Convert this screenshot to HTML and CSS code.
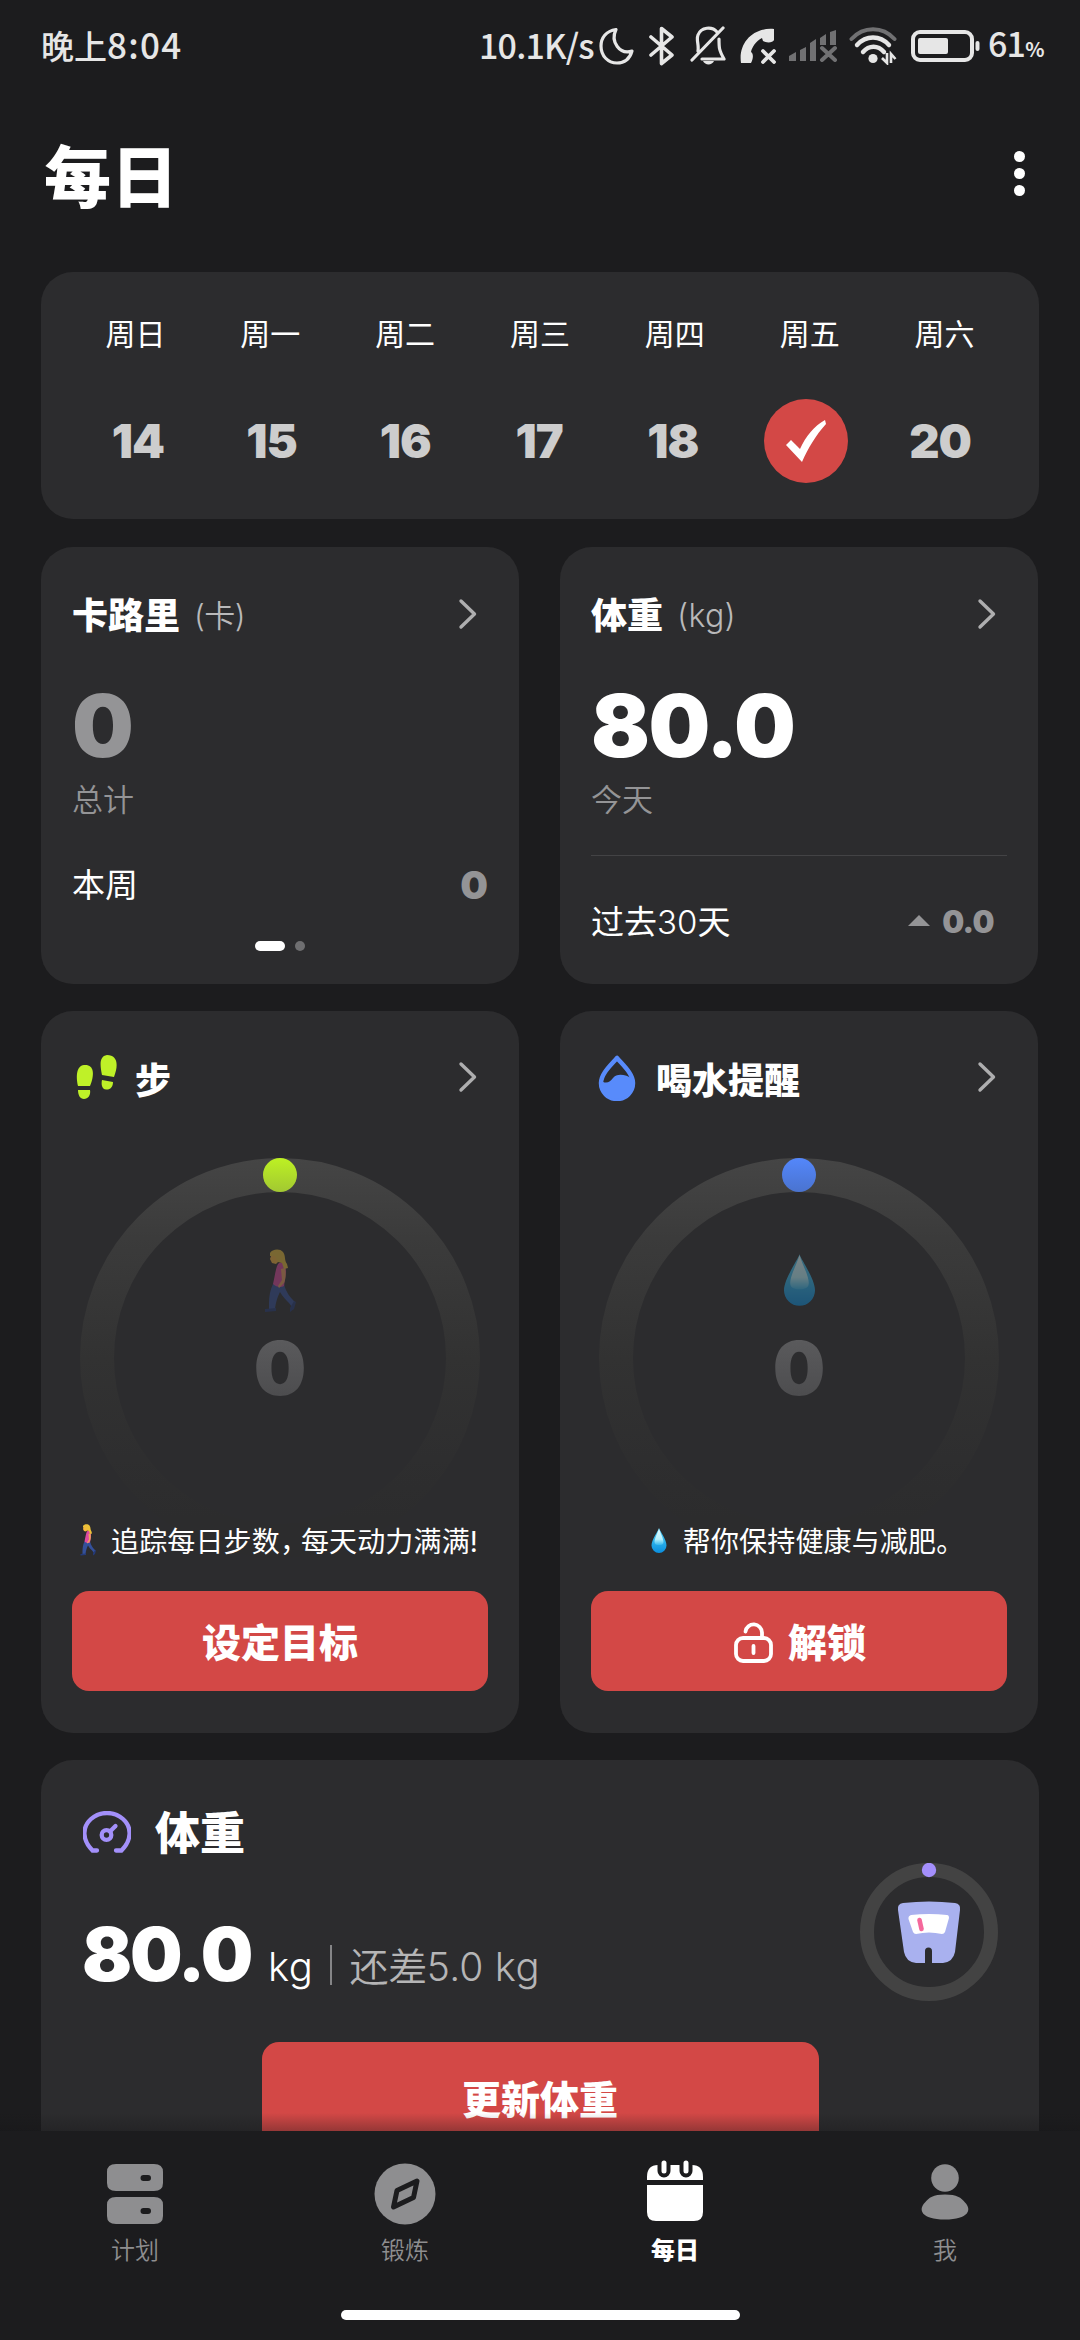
FILE: index.html
```html
<!DOCTYPE html>
<html lang="zh-CN">
<head>
<meta charset="utf-8">
<title>每日</title>
<link rel="stylesheet" href="styles.css">
</head>
<body>
<svg class="defs" width="0" height="0" aria-hidden="true">
  <defs>
    <linearGradient id="fade" gradientUnits="userSpaceOnUse" x1="0" y1="0" x2="0" y2="400">
      <stop offset="0" stop-color="#454545"/>
      <stop offset=".2" stop-color="#3b3b3b"/>
      <stop offset=".5" stop-color="#323232"/>
      <stop offset=".75" stop-color="#2e2e2f"/>
      <stop offset=".9" stop-color="#2c2c2d"/>
    </linearGradient>
    <linearGradient id="lime" x1="0" y1="0" x2="0" y2="1"><stop offset="0" stop-color="#bdf123"/><stop offset="1" stop-color="#a2c832"/></linearGradient>
    <linearGradient id="blue" x1="0" y1="0" x2="0" y2="1"><stop offset="0" stop-color="#5487fb"/><stop offset="1" stop-color="#4a73cf"/></linearGradient>
    <linearGradient id="dropOuter" x1="0" y1="0" x2="0" y2="1"><stop offset="0" stop-color="#50c8f0"/><stop offset=".5" stop-color="#2fb4ec"/><stop offset="1" stop-color="#0a8ede"/></linearGradient>
    <linearGradient id="dropInner" x1="0" y1="0" x2="0" y2="1"><stop offset="0" stop-color="#e4fbff"/><stop offset=".65" stop-color="#b5f0fc"/><stop offset="1" stop-color="#35b8ee"/></linearGradient>
    <symbol id="chevron" viewBox="0 0 20 32"><path d="M3 3l13.500 13L3 29" fill="none" stroke="currentColor" stroke-width="3.400" stroke-linecap="round" stroke-linejoin="round"/></symbol>
    <symbol id="drop" viewBox="0 0 30 50">
      <path d="M15 0C17 6 30 24 30 35a15 15 0 0 1-30 0C0 24 13 6 15 0z" fill="url(#dropOuter)"/>
      <path d="M15 1c2 7 9 20 9 27 0 5-4 6-9 6s-9-1-9-6C6 21 13 8 15 1z" fill="url(#dropInner)"/>
    </symbol>
    <symbol id="walker" viewBox="0 0 32 64">
      <path d="M9 35c-3 6-4 13-4 19l0 6 6 0c1-8 3-13 5-17 3 5 6 8 9 11l3 4 3-5c-4-4-9-9-11-18z" fill="#34509a"/>
      <path d="M1 60l11-1 0 3-11 1zM26 59l4-7 2 1-2 7-4 3z" fill="#243a78"/>
      <path d="M15 14c-3 2-4 13-6 21 3 3 8 4 11 2l2-14c0-5-1-8-3-10z" fill="#dd48a0"/>
      <path d="M17 20l4-1c1 6 1 10-1 15l-5 5-1-2 4-6z" fill="#f0a060"/>
      <path d="M8 4c3 0 6 2 7 8l-3 3-4-1-2-4z" fill="#f8b63c"/>
      <path d="M6 4C8 0 16-1 19 3c3 4 1 8 4 12l1 4-4 1-2-6-4-1-3-6-5 0z" fill="#ecc038"/>
    </symbol>
  </defs>
</svg>

<header class="status">
  <span class="status-time">晚上<span class="status-digits">8:04</span></span>
  <div class="status-right">
    <span class="speed">10.1K/s</span>
    <svg class="ic-moon" width="36" height="38" viewBox="0 0 36 38"><path d="M17 2.500C7 4 2 11 2 19c0 10 7 17 16 17 8 0 13-5 15-12C21 28 11 15 17 2.500z" fill="none" stroke="#e6e6e6" stroke-width="3.200" stroke-linejoin="round"/></svg>
    <svg class="ic-bt" width="26" height="40" viewBox="0 0 26 40"><path d="M2 11l21 18-10.500 8.500v-35L23 11 2 29" fill="none" stroke="#e6e6e6" stroke-width="3.600" stroke-linejoin="round" stroke-linecap="round"/></svg>
    <svg class="ic-bell" width="36" height="40" viewBox="0 0 36 40"><path d="M8 25C9 18 6 14 8 9c3-8 14-9 19-3M29 13c0 9 0 11 5 20H12M33 2L2 34" fill="none" stroke="#e6e6e6" stroke-width="3.200" stroke-linecap="round" stroke-linejoin="round"/><path d="M13 35h11c-2 4.500-9 4.500-11 0z" fill="#e6e6e6"/></svg>
    <svg class="ic-call" width="36" height="36" viewBox="0 0 36 36"><path d="M34 1v11c-1 3-8 3-11 1l-1-3c-6 3-10 9-11 14 3 2 2 7 0 11H1C-2 15 13-1 34 1z" fill="#e6e6e6"/><path d="M23 23l11 11M34 23L23 34" stroke="#e6e6e6" stroke-width="3.800" stroke-linecap="round"/></svg>
    <svg class="ic-signal" width="48" height="32" viewBox="0 0 48 32"><g fill="#717173"><path d="M0 26l7-4v9H0zM11 20l6-3v14h-6zM21 13l6-4v22h-6zM31 8l6-4v11h-6zM41 2l6-2v15h-6z"/></g><path d="M33 18l13 12M46 18L33 30" stroke="#717173" stroke-width="4" stroke-linecap="round"/></svg>
    <svg class="ic-wifi" width="48" height="38" viewBox="0 0 48 38"><g fill="none" stroke-linecap="round"><path d="M2.500 12c12-13 31-13 43 0" stroke="#717173" stroke-width="4"/><path d="M8 18c9-10 23-10 32 0M14 25c6-7 15-7 21 0" stroke="#e6e6e6" stroke-width="4.400"/></g><circle cx="24" cy="31.500" r="4.600" fill="#e6e6e6"/><path d="M38 26v10l-5-5M42 36V27l4.500 5" fill="none" stroke="#e6e6e6" stroke-width="2.600"/></svg>
    <svg class="ic-batt" width="69" height="32" viewBox="0 0 69 32"><rect x="2" y="2" width="59" height="28" rx="7" fill="none" stroke="#e6e6e6" stroke-width="4"/><rect x="7" y="8" width="30" height="16" rx="2" fill="#e6e6e6"/><rect x="64.500" y="11" width="4" height="10" rx="2" fill="#e6e6e6"/></svg>
    <span class="percent">61<small>%</small></span>
  </div>
</header>

<div class="titlebar">
  <h1>每日</h1>
  <div class="menu"><i></i><i></i><i></i></div>
</div>

<main class="content">
  <section class="card week">
    <div class="names"><span>周日</span><span>周一</span><span>周二</span><span>周三</span><span>周四</span><span>周五</span><span>周六</span></div>
    <div class="dates">
      <b>14</b><b>15</b><b>16</b><b>17</b><b>18</b>
      <em><svg width="42" height="44" viewBox="0 0 42 44"><path d="M1 26l5-5 9 9C21 17 29 7 40 1l1 4C31 16 23 29 17 43z" fill="#fff"/></svg></em>
      <b>20</b>
    </div>
  </section>

  <div class="grid">
    <section class="card stat">
      <div class="head"><h2>卡路里</h2><span class="unit">(卡)</span><svg class="chev" width="20" height="32"><use href="#chevron"/></svg></div>
      <div class="big dim">0</div>
      <div class="caption">总计</div>
      <div class="row row-week"><span>本周</span><b class="count">0</b></div>
      <div class="pager"><i class="on"></i><i></i></div>
    </section>
    <section class="card stat">
      <div class="head"><h2>体重</h2><span class="unit unit-kg">(kg)</span><svg class="chev" width="20" height="32"><use href="#chevron"/></svg></div>
      <div class="big">80.0</div>
      <div class="caption">今天</div>
      <div class="row row-month"><span>过去<span class="thin">30</span>天</span><div class="delta"><i></i><b>0.0</b></div></div>
    </section>

    <section class="card goal">
      <div class="head">
        <svg class="lead" width="42" height="46" viewBox="0 0 42 46"><g fill="#bff128"><path d="M2 31C0 22 0 11 8 10c10-1 11 9 6 21zM2 35h12c1 5-2 9-6 9s-6-4-6-9z"/><path d="M26 20c-2-9-3-19 5-20 10 0 12 9 7 22zM26 25l11 2c0 5-3 8-7 7.500-4-.5-5-5-4-9.500z"/></g></svg>
        <h2>步</h2><svg class="chev" width="20" height="32"><use href="#chevron"/></svg>
      </div>
      <div class="ring">
        <svg class="ring-track" width="400" height="400" viewBox="0 0 400 400"><circle cx="200" cy="200" r="183" fill="none" stroke="url(#fade)" stroke-width="34"/><circle cx="200" cy="17" r="17" fill="url(#lime)"/></svg>
        <svg class="ring-icon" width="32" height="64"><use href="#walker"/></svg>
        <b>0</b>
      </div>
      <p class="hint"><svg class="walk-sm" width="16" height="32"><use href="#walker"/></svg><span>追踪每日步数<span class="comma">，</span>每天动力满满!</span></p>
      <button>设定目标</button>
    </section>
    <section class="card goal water">
      <div class="head">
        <svg class="lead" width="42" height="46" viewBox="0 0 42 46"><path d="M21 3C14 11 5 19 5 28a16 16 0 0 0 32 0C37 19 28 11 21 3z" fill="none" stroke="#588bfb" stroke-width="4.500" stroke-linejoin="round"/><path d="M4 25c6 5 10 2 13-2 4-5 12-4 20 1v5a16.500 15 0 0 1-33 0z" fill="#588bfb"/></svg>
        <h2>喝水提醒</h2><svg class="chev" width="20" height="32"><use href="#chevron"/></svg>
      </div>
      <div class="ring">
        <svg class="ring-track" width="400" height="400" viewBox="0 0 400 400"><circle cx="200" cy="200" r="183" fill="none" stroke="url(#fade)" stroke-width="34"/><circle cx="200" cy="17" r="17" fill="url(#blue)"/></svg>
        <svg class="ring-icon ring-drop" width="31" height="52"><use href="#drop"/></svg>
        <b>0</b>
      </div>
      <p class="hint"><svg class="drop-sm" width="16" height="25"><use href="#drop"/></svg><span>帮你保持健康与减肥<span class="stop">。</span></span></p>
      <button><svg width="40" height="42" viewBox="0 0 40 42"><g fill="none" stroke="#fff" stroke-width="3.800" stroke-linecap="round"><rect x="2" y="16" width="35" height="23" rx="7"/><path d="M11.500 9.500a8.300 8.300 0 0 1 16.500 1V16M19.500 24v7"/></g></svg>解锁</button>
    </section>
  </div>

  <section class="card weight">
    <div class="weight-info">
      <div class="weight-head">
        <svg width="48" height="42" viewBox="0 0 48 42"><g fill="none" stroke="#a390fa" stroke-width="4.300" stroke-linecap="round"><path d="M14 39.500H9.500C-1 29-1 16 8 8c9-8 23-8 32 0s9 21-1.500 31.500H33"/><circle cx="23.500" cy="24" r="4.800"/><path d="M27 20.500l5.500-5.500"/></g></svg>
        <h3>体重</h3>
      </div>
      <div class="weight-line"><b>80.0</b><span class="kg">kg</span><i></i><span class="left">还差<span class="five">5.0</span><span class="kg2">kg</span></span></div>
    </div>
    <svg class="weight-ring" width="138" height="138" viewBox="0 0 138 138">
      <circle cx="69" cy="69" r="62" fill="none" stroke="#434343" stroke-width="14"/><circle cx="69" cy="7" r="7.200" fill="#a48ffc"/>
      <path d="M43 40q26-3 52 0 6 1 5 7l-5 42q-2 10-12 11H72V88a3.500 3.500 0 0 0-7 0v12H56q-10-1-12-11L38 47q-1-6 5-7z" fill="#a9b1ef"/>
      <path d="M51 52q18-2 36 0 2 0 2 3l-4 14q-1 2-3 2-13-3-26 0-2 0-3-2L48.500 56q-.5-3 2.500-4z" fill="#fff"/>
      <path d="M59.500 57l2 9" stroke="#f5689c" stroke-width="4.600" stroke-linecap="round"/>
    </svg>
    <button>更新体重</button>
  </section>
</main>

<nav class="tabs">
  <a><svg width="62" height="66" viewBox="0 0 62 66"><path fill-rule="evenodd" fill="#8e8e90" d="M12 5h38q9 0 9 8v11q0 8-9 8H12q-9 0-9-8V13q0-8 9-8zM39.500 16q-3 0-3 3t3 3h4.500q3 0 3-3t-3-3zM12 38h38q9 0 9 8v11q0 8-9 8H12q-9 0-9-8V46q0-8 9-8zM39.500 49q-3 0-3 3t3 3h4.500q3 0 3-3t-3-3z"/></svg><span>计划</span></a>
  <a><svg width="62" height="66" viewBox="0 0 62 66"><circle cx="31" cy="35" r="30.500" fill="#8e8e90"/><path d="M43 22l-3.500 16.500L19.500 48l3.500-16.500z" fill="#8e8e90" stroke="#1c1c1e" stroke-width="5" stroke-linejoin="round"/></svg><span>锻炼</span></a>
  <a class="active"><svg width="62" height="66" viewBox="0 0 62 66"><path d="M3 21v-3q0-12 11-12h34q11 0 11 12v3zM3 26h56v27q0 9-9 9H12q-9 0-9-9z" fill="#fff"/><path d="M20 4v8M42 4v8" stroke="#1c1c1e" stroke-width="13" stroke-linecap="round"/><path d="M20 4v8M42 4v8" stroke="#fff" stroke-width="5" stroke-linecap="round"/></svg><span>每日</span></a>
  <a><svg width="62" height="66" viewBox="0 0 62 66"><circle cx="31" cy="19" r="13.800" fill="#8e8e90"/><path d="M31 35.500c12 0 16 3 20 8 7 7 4 17-20 17s-27-10-20-17c4-5 8-8 20-8z" fill="#8e8e90"/></svg><span>我</span></a>
</nav>
<div class="home"></div>
</body>
</html>
```
FILE: styles.css
```css
* { box-sizing: border-box; margin: 0; padding: 0; }
body {
  width: 1080px; height: 2340px; overflow: hidden;
  display: flex; flex-direction: column;
  background: #1c1c1e; color: #fff;
  font-family: Inter, "Noto Sans CJK SC", sans-serif;
}
svg { display: block; flex: none; }
.defs { position: absolute; }
h1, h2, h3, b { font-weight: 900; }
i, em { font-style: normal; }

.status {
  height: 92px; padding: 0 39px 0 41px;
  display: flex; align-items: center; justify-content: space-between;
  color: #e6e6e6; font-weight: 500;
  font-family: "Noto Sans CJK SC", sans-serif;
}
.status-time { font-size: 33px; line-height: 40px; white-space: nowrap; margin-top: -3px; }
.status-digits { font-size: 35px; letter-spacing: 1.300px; }
.status-right { display: flex; align-items: center; height: 92px; }
.speed { width: 120px; font-size: 34px; line-height: 40px; white-space: nowrap; margin-top: -3px; letter-spacing: -.8px; }
.ic-moon { margin-right: 14px; }
.ic-bt { margin-right: 15px; }
.ic-bell { margin-right: 14px; }
.ic-call { margin-right: 13px; }
.ic-signal { margin-right: 12px; }
.ic-wifi { margin-right: 14px; }
.ic-batt { margin-right: 8px; }
.percent { width: 53px; font-size: 34px; line-height: 40px; white-space: nowrap; margin-top: -1px; letter-spacing: -.8px; }
.percent small { font-size: 20px; font-weight: 700; }

.titlebar {
  height: 180px; padding: 48px 52px 0 44px;
  display: flex; justify-content: space-between;
}
h1 { font-size: 67px; line-height: 76px; }
.menu { display: flex; flex-direction: column; gap: 6px; padding-top: 11px; width: 14px; }
.menu i { width: 11px; height: 11px; border-radius: 50%; background: #fff; }

.content {
  position: relative; flex: none; height: 1859px; overflow: hidden;
  padding: 0 41px; display: flex; flex-direction: column; gap: 28px;
}
.content::after {
  content: ""; position: absolute; left: 0; right: 0; bottom: 0; height: 18px;
  background: linear-gradient(rgba(20,20,22,0), rgba(20,20,22,.32));
}
.card { background: #2c2c2e; border-radius: 32px; }

.week { height: 247px; flex: none; padding-top: 42px; }
.names { display: grid; grid-template-columns: repeat(7, 1fr); padding: 0 27px; justify-items: center; font-size: 30px; line-height: 40px; }
.dates { display: grid; grid-template-columns: repeat(7, 1fr); padding: 0 32px 0 30px; justify-items: center; margin-top: 45px; }
.dates b { font-size: 47px; line-height: 84px; color: #cdcdcd; letter-spacing: -1px; }
.dates em { width: 84px; height: 84px; border-radius: 50%; background: #d34846; display: flex; align-items: center; justify-content: center; }

.grid { display: grid; grid-template-columns: 478px 478px; column-gap: 41px; row-gap: 27px; grid-template-rows: 437px 722px; flex: none; }
.stat, .goal { padding: 0 31px; display: flex; flex-direction: column; }
.head { height: 56px; margin-top: 41px; display: flex; align-items: center; }
h2 { font-size: 36px; line-height: 56px; }
.unit { margin-left: 14px; font-size: 31px; line-height: 52px; font-weight: 350; color: #b9b9ba; letter-spacing: -.5px; }
.unit-kg { font-size: 32px; font-weight: 300; letter-spacing: .3px; }
.chev { margin-left: auto; margin-right: 10px; color: #aeaeaf; }
.stat .chev { margin-top: -5px; }
.big { font-size: 87px; font-weight: 900; line-height: 90px; margin-top: 37px; letter-spacing: -1.600px; }
.dim { color: #949496; }
.caption { font-size: 31px; line-height: 40px; margin-top: 9px; font-weight: 350; color: #949496; }
.row { display: flex; align-items: center; justify-content: space-between; font-size: 33px; }
.thin { font-weight: 300; }
.row-week { margin-top: 37px; height: 52px; }
.count { font-size: 39px; color: #949496; padding-top: 3px; }
.pager { display: flex; justify-content: center; gap: 10px; margin-top: 32px; }
.pager i { width: 10px; height: 10px; border-radius: 5px; background: #6f6f71; }
.pager .on { width: 30px; background: #fff; }
.row-month { margin-top: 35px; border-top: 1px solid #434345; padding: 43px 13px 0 0; line-height: 46px; }
.delta { display: flex; align-items: center; gap: 12px; color: #949496; font-size: 31px; letter-spacing: -.6px; }
.delta i { border: 11px solid transparent; border-top-width: 0; border-bottom-color: #949496; margin-top: -4px; }

.goal .head { gap: 17px; height: 60px; margin-top: 38px; }
.goal .lead { margin-left: 4px; margin-top: -2px; }
.goal .chev { margin-top: -4px; }
.goal h2 { line-height: 60px; padding-top: 3px; }
.water .head { gap: 18px; }
.water .lead { margin-left: 5px; }
.ring { position: relative; height: 356px; margin-top: 49px; display: flex; flex-direction: column; align-items: center; }
.ring-track { position: absolute; left: 8px; top: 0; }
.ring-icon { margin-top: 91px; opacity: .4; }
.ring-drop { margin-top: 96px; margin-bottom: 7px; opacity: .42; }
.ring b {
  font-size: 74px; line-height: 80px; margin-top: 15px;
  background: linear-gradient(#5d5d5f, #4a4a4c); -webkit-background-clip: text; background-clip: text; color: transparent;
}
.hint { height: 52px; display: flex; align-items: center; justify-content: center; gap: 15px; font-size: 28px; white-space: nowrap; position: relative; letter-spacing: .15px; padding-right: 2px; }
.water .hint { padding: 0 0 0 3px; gap: 16px; }
.comma { letter-spacing: -7px; }
.stop { letter-spacing: -14px; }
button {
  height: 100px; width: 100%; border: 0; border-radius: 17px; background: #d34846; color: #fff;
  font: 900 39px/98px Inter, "Noto Sans CJK SC", sans-serif; padding-top: 3px;
  display: flex; align-items: center; justify-content: center; gap: 14px;
}
.goal button { margin-top: 25px; }
.water button { padding-left: 2px; }

.weight { height: 460px; flex: none; margin-top: -1px; padding: 42px 41px 0; display: grid; grid-template-columns: 1fr 138px; grid-template-rows: 240px 114px; }
.weight-head { display: flex; align-items: center; gap: 24px; height: 64px; padding-left: 1px; }
.weight-head svg { margin-top: -5px; }
h3 { font-size: 45px; line-height: 68px; }
.weight-line { display: flex; align-items: baseline; height: 90px; margin-top: 43px; line-height: 90px; font-size: 40px; white-space: nowrap; }
.weight-line b { font-size: 74px; letter-spacing: -2.300px; }
.weight-line > i { width: 2px; height: 40px; background: #858587; align-self: center; margin: 22px 17px 0 17px; }
.kg { font-weight: 300; margin-left: 17px; letter-spacing: .5px; }
.left { font-weight: 350; color: #b5b5b6; font-size: 39px; letter-spacing: -.3px; }
.five { font-weight: 300; letter-spacing: .2px; }
.kg2 { margin-left: 11px; font-size: 40px; font-weight: 300; letter-spacing: .5px; }
.weight-ring { margin-top: 61px; }
.weight button { grid-column: 1 / 3; width: 557px; height: 114px; margin: 0 auto; padding-top: 2px; }

.tabs { height: 179px; flex: none; padding-top: 28px; display: grid; grid-template-columns: repeat(4, 270px); }
.tabs a { display: flex; flex-direction: column; align-items: center; color: #8e8e90; font-size: 24px; line-height: 36px; font-weight: 350; gap: 8px; }
.tabs .active { color: #fff; font-weight: 900; }
.home { width: 399px; height: 10px; margin: 0 auto; border-radius: 5px; background: #fff; flex: none; }
```
